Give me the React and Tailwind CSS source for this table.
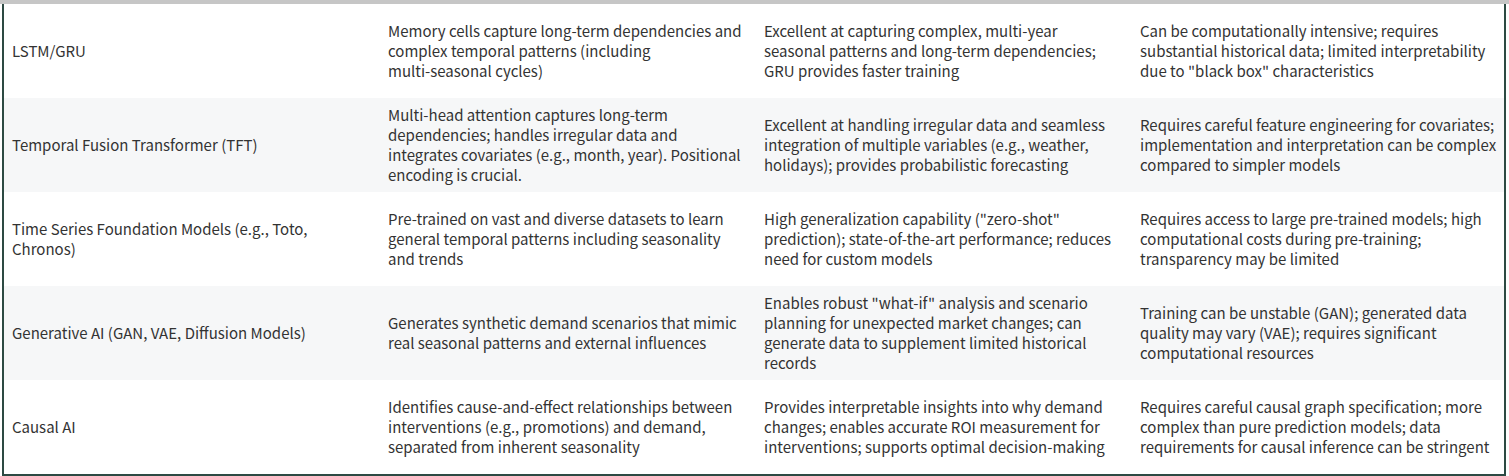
import React from "react";

const rows = [
  [
    "LSTM/GRU",
    "Memory cells capture long-term dependencies and complex temporal patterns (including multi-seasonal cycles)",
    "Excellent at capturing complex, multi-year seasonal patterns and long-term dependencies; GRU provides faster training",
    "Can be computationally intensive; requires substantial historical data; limited interpretability due to \"black box\" characteristics",
  ],
  [
    "Temporal Fusion Transformer (TFT)",
    "Multi-head attention captures long-term dependencies; handles irregular data and integrates covariates (e.g., month, year). Positional encoding is crucial.",
    "Excellent at handling irregular data and seamless integration of multiple variables (e.g., weather, holidays); provides probabilistic forecasting",
    "Requires careful feature engineering for covariates; implementation and interpretation can be complex compared to simpler models",
  ],
  [
    "Time Series Foundation Models (e.g., Toto, Chronos)",
    "Pre-trained on vast and diverse datasets to learn general temporal patterns including seasonality and trends",
    "High generalization capability (\"zero-shot\" prediction); state-of-the-art performance; reduces need for custom models",
    "Requires access to large pre-trained models; high computational costs during pre-training; transparency may be limited",
  ],
  [
    "Generative AI (GAN, VAE, Diffusion Models)",
    "Generates synthetic demand scenarios that mimic real seasonal patterns and external influences",
    "Enables robust \"what-if\" analysis and scenario planning for unexpected market changes; can generate data to supplement limited historical records",
    "Training can be unstable (GAN); generated data quality may vary (VAE); requires significant computational resources",
  ],
  [
    "Causal AI",
    "Identifies cause-and-effect relationships between interventions (e.g., promotions) and demand, separated from inherent seasonality",
    "Provides interpretable insights into why demand changes; enables accurate ROI measurement for interventions; supports optimal decision-making",
    "Requires careful causal graph specification; more complex than pure prediction models; data requirements for causal inference can be stringent",
  ],
];

// keep hyphenated words together like the source does
function Text({ children }) {
  const parts = children.split(" ");
  return parts.map((w, k) => (
    <React.Fragment key={k}>
      {w.includes("-") ? <span className="whitespace-nowrap">{w}</span> : w}
      {k < parts.length - 1 ? " " : ""}
    </React.Fragment>
  ));
}

export default function App() {
  return (
    <div
      className="w-[1509px] h-[476px] bg-white text-[#333] text-[15px] leading-5"
      style={{ fontFamily: '"Noto Sans CJK KR", "Noto Sans", sans-serif' }}
    >
      <div className="h-1 bg-[#c6c6c6]" />
      <div className="ml-[2px] w-[1504px] border-l-2 border-r-2 border-b-2 border-[#2d4a43]">
        {rows.map((row, i) => (
          <div
            key={i}
            className={`grid grid-cols-[372px_376px_376px_376px] h-[94px] ${i % 2 === 1 ? "bg-[#f6f7f8]" : "bg-white"}`}
          >
            {row.map((cell, j) => (
              <div
                key={j}
                className={`flex items-center ${j === 0 ? "pl-2 pr-2" : j === 3 ? "pl-3 pr-0" : "pl-3 pr-2"}`}
              >
                <p>
                  <Text>{cell}</Text>
                </p>
              </div>
            ))}
          </div>
        ))}
      </div>
    </div>
  );
}
